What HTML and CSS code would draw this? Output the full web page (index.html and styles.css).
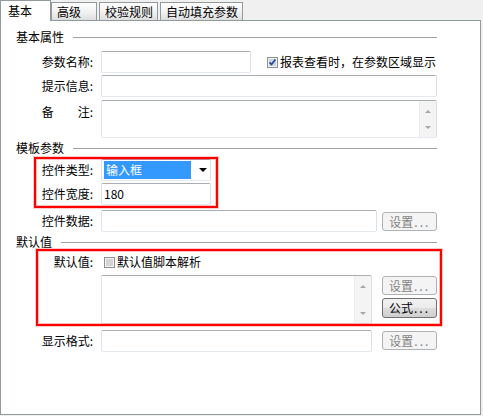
FILE: index.html
```html
<!DOCTYPE html>
<html>
	<head>
		<meta charset="utf-8">
		<title>参数属性</title>
		<link rel="stylesheet" href="styles.css">
	</head>
	<body>
		<div class="tabs">
			<span class="tab on">基本</span>
			<span class="tab t2">高级</span>
			<span class="tab">校验规则</span>
			<span class="tab">自动填充参数</span>
		</div>
		<div class="panel">
			<!-- 基本属性 -->
			<div class="sect first"><span>基本属性</span></div>
			<div class="row r1">
				<span class="lab">参数名称:</span>
				<div class="box w150"></div>
				<svg class="chk c1" width="11" height="11" viewBox="0 0 11 11"><rect x=".5" y=".5" width="10" height="10" fill="#eef1f5" stroke="#8e8f8f"/><rect x="2" y="2" width="7" height="7" fill="#cdd5e0"/><path d="M2.6 5.4l1.9 2.1 3.9-5" fill="none" stroke="#21449b" stroke-width="1.7"/></svg>
				<span>报表查看时，在参数区域显示</span>
			</div>
			<div class="row r2">
				<span class="lab">提示信息:</span>
				<div class="box grow"></div>
			</div>
			<div class="row r3 top">
				<span class="lab">备&emsp;&emsp;注:</span>
				<div class="box area grow">
					<div class="scroll"><i class="up"></i><i class="down"></i></div>
				</div>
			</div>

			<!-- 模板参数 -->
			<div class="sect s2"><span>模板参数</span></div>
			<div class="row r4">
				<span class="lab">控件类型:</span>
				<div class="box w110 sel"><span class="hl">输入框</span><i class="drop"></i></div>
			</div>
			<div class="row r2">
				<span class="lab">控件宽度:</span>
				<div class="box w110 val">180</div>
			</div>
			<div class="row r5">
				<span class="lab">控件数据:</span>
				<div class="box w278"></div>
				<span class="btn off b1">设置<b>...</b></span>
			</div>

			<!-- 默认值 -->
			<div class="sect s2"><span>默认值</span></div>
			<div class="row r6">
				<span class="lab">默认值:</span>
				<svg class="chk c2" width="11" height="11" viewBox="0 0 11 11"><rect x=".5" y=".5" width="10" height="10" fill="#f4f4f4" stroke="#8e8f8f"/><rect x="2" y="2" width="7" height="7" fill="#d4d4d4"/></svg>
				<span>默认值脚本解析</span>
			</div>
			<div class="row r7 top">
				<span class="lab"></span>
				<div class="box area2 w273">
					<div class="scroll"><i class="up"></i><i class="down"></i></div>
				</div>
				<div class="btns">
					<span class="btn off">设置<b>...</b></span>
					<span class="btn">公式<b>...</b></span>
				</div>
			</div>
			<div class="row r8">
				<span class="lab">显示格式:</span>
				<div class="box w273"></div>
				<span class="btn off b2">设置<b>...</b></span>
			</div>

			<!-- 标注框 -->
			<div class="mark m1"></div>
			<div class="mark m2"></div>
		</div>
	</body>
</html>
```

FILE: styles.css
```css
html,body {margin: 0;padding: 0;}
body {width: 483px;height: 416px;overflow: hidden;background: #f0f0f0;color: #000;font: 12px/16px "Noto Sans CJK SC", "Liberation Sans", sans-serif;}

/* 选项卡 */
.tabs {display: flex;align-items: flex-end;height: 20px;}
.tab {box-sizing: border-box;height: 18px;line-height: 18px;padding: 0 4px 0 5px;margin-left: 2px;border: 1px solid #919b9c;border-bottom: none;background: linear-gradient(#ffffff, #f1f1f1 55%, #dedede);}
.tab.on {position: relative;z-index: 1;height: 21px;line-height: 20px;margin: 0 0 -1px 0;width: 51px;padding-left: 7px;background: #fff;}
.tab.t2 {width: 46px;margin-left: 0;}

/* 面板 */
.panel {position: relative;box-sizing: border-box;width: 481px;height: 395px;padding: 0 43px 0 15px;border: 1px solid #919b9c;background: #fff;}
.sect {display: flex;align-items: center;height: 16px;margin-top: 2px;}
.sect.first {margin-top: 8px;}
.sect::after {content: "";flex: 1;margin-left: 9px;border-top: 1px solid #a0a0a0;}

.row {display: flex;align-items: center;height: 22px;}
.row.top {align-items: flex-start;}
.lab {flex: none;width: 77px;margin-right: 8px;text-align: right;white-space: nowrap;}
.row.top .lab {margin-top: 4px;}
.r1 {margin-top: 6px;}
.r2 {margin-top: 2px;}
.r3 {margin-top: 3px;height: 38px;}
.r4 {margin-top: 3px;}
.r5 {margin-top: 5px;}
.r6 {margin-top: 2px;height: 20px;}
.r7 {margin-top: 3px;height: 49px;}
.r8 {margin-top: 6px;}

/* 输入框 */
.box {position: relative;box-sizing: border-box;height: 22px;border: 1px solid;border-color: #abadb3 #dbdfe6 #e3e9ef #e2e3ea;border-radius: 2px;background: #fff;}
.grow {flex: 1;}
.w150 {width: 150px;}
.w110 {width: 110px;}
.w278 {width: 278px;}
.w273 {width: 273px;}
.area {height: 38px;}
.area2 {height: 49px;}
.val {padding-left: 2px;line-height: 20px;}

.sel {display: flex;align-items: center;}
.hl {width: 87px;height: 18px;line-height: 18px;margin-left: 2px;padding-left: 2px;box-sizing: border-box;background: #3399ff;color: #fff;}
.drop {margin-left: 8px;border-left: 4px solid transparent;border-right: 4px solid transparent;border-top: 4px solid #000;}

/* 滚动条 */
.scroll {position: absolute;top: 0;right: 0;bottom: 0;width: 17px;display: flex;flex-direction: column;justify-content: space-between;align-items: center;padding: 9px 0 8px;box-sizing: border-box;background: #f4f4f4;border-left: 1px solid #ececec;}
.up {border-left: 3px solid transparent;border-right: 3px solid transparent;border-bottom: 3px solid #a6a6a6;}
.down {border-left: 3px solid transparent;border-right: 3px solid transparent;border-top: 3px solid #a6a6a6;}

/* 复选框 */
.chk {flex: none;margin-right: 2px;}
.c1 {margin-left: 16px;}
.c2 {margin-left: 3px;}

/* 按钮 */
.btn {box-sizing: border-box;display: block;width: 55px;height: 19px;line-height: 17px;padding-left: 6px;border: 1px solid #707070;border-radius: 3px;background: linear-gradient(#f2f2f2, #ebebeb 50%, #dddddd 51%, #cfcfcf);white-space: nowrap;}
.btn b {font-weight: normal;letter-spacing: 2px;margin-left: 1px;}
.btn.off {border-color: #adb2b5;background: #f4f4f4;color: #838383;}
.b1 {margin-left: 5px;}
.b2 {margin-left: 10px;margin-top: -2px;}
.btns {margin-left: 10px;margin-top: 1px;}
.btns .btn + .btn {margin-top: 3px;height: 20px;line-height: 18px;}

/* 红色标注框 */
.mark {position: absolute;box-sizing: border-box;border: 2px solid #ff0000;box-shadow: inset 0 0 0 1px rgba(255,0,0,.25), 0 0 0 1px rgba(255,0,0,.2);}
.m1 {left: 33px;top: 136px;width: 184px;height: 51px;}
.m2 {left: 35px;top: 228px;width: 406px;height: 77px;}
```
